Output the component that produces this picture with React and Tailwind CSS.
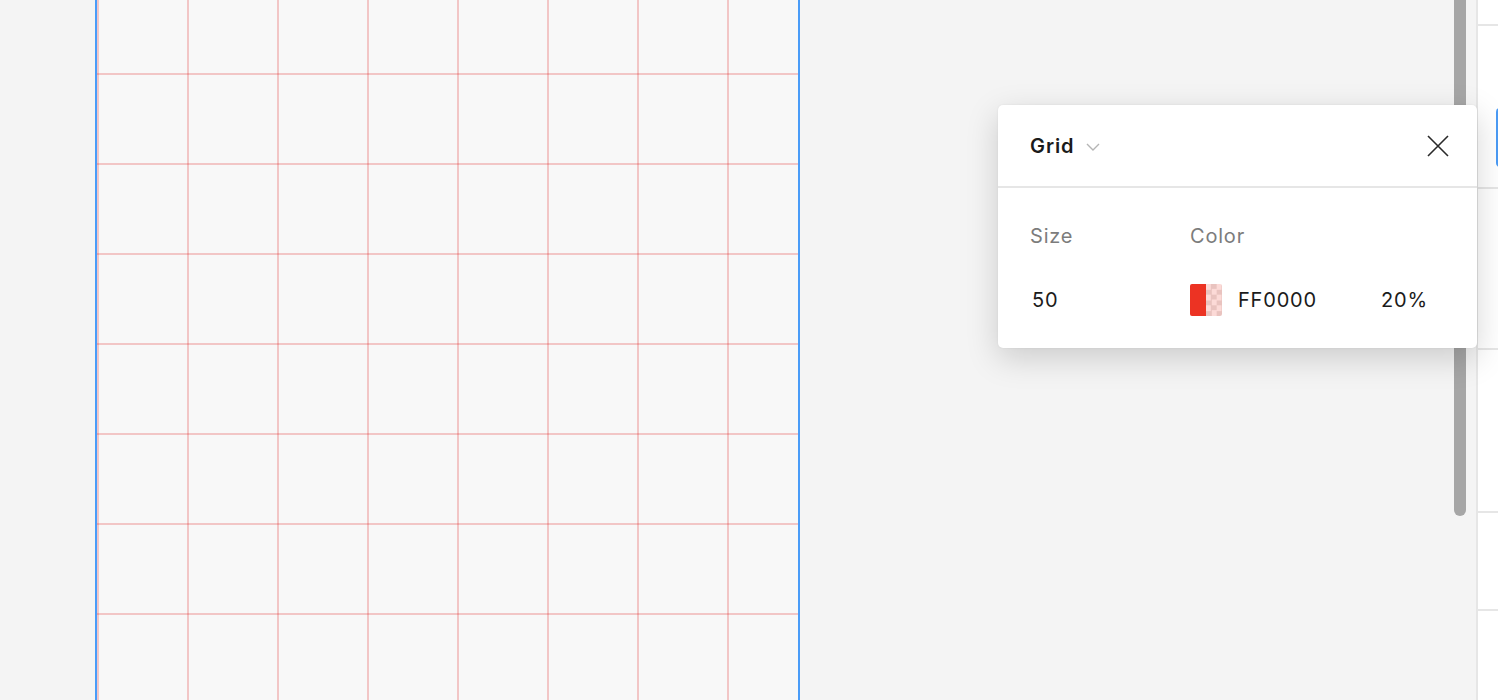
import React from 'react';

const GridPopover = () => {
  return (
    <div className="absolute left-[998px] top-[105px] w-[479px] rounded-[5px] bg-white shadow-[0_10px_32px_rgba(0,0,0,0.17),0_0_2px_rgba(0,0,0,0.08)]">
      {/* Header */}
      <div className="flex h-[83px] items-center border-b-2 border-[#e6e6e6] pl-8 pr-[28px]">
        <span className="text-[20px] font-semibold leading-none tracking-[0.9px] text-[#1b1b1b]">Grid</span>
        <svg className="ml-[12px] mt-[2px]" width="14" height="8" viewBox="0 0 14 8" fill="none">
          <path d="M1 1l6 6 6-6" stroke="#b5b5b5" strokeWidth="1.4" />
        </svg>
        <button type="button" className="ml-auto">
          <svg width="22" height="22" viewBox="0 0 22 22" fill="none">
            <path d="M1 1l20 20M21 1L1 21" stroke="#2a2a2a" strokeWidth="1.6" />
          </svg>
        </button>
      </div>

      {/* Body */}
      <div className="pl-8 pt-[33px] pb-[33px] tracking-[0.8px]">
        <div className="flex h-[30px] items-center text-[20px] text-[#7c7c7c]">
          <span className="w-[160px]">Size</span>
          <span>Color</span>
        </div>
        <div className="mt-[34px] flex h-[30px] items-center text-[20px] text-[#1b1b1b]">
          <span className="w-[160px] pl-[2px]">50</span>
          <div className="flex h-8 w-8 overflow-hidden rounded-[2px]">
            <div className="h-full w-1/2 bg-[#ec3323]" />
            <div className="h-full w-1/2 bg-[conic-gradient(#e9c3bf_25%,#fcdad7_0_50%,#e9c3bf_0_75%,#fcdad7_0)] bg-[size:10.67px_10.67px]" />
          </div>
          <span className="ml-4 w-[145px]">FF0000</span>
          <span className="-ml-[2px]">20%</span>
        </div>
      </div>
    </div>
  );
};

const App = () => {
  return (
    <div className="relative flex h-[700px] w-full overflow-hidden bg-[#f4f4f4] font-['Inter','Noto_Sans',sans-serif]">
      {/* Canvas left margin */}
      <div className="w-[95px] shrink-0" />

      {/* Frame with layout grid */}
      <div className="w-[705px] shrink-0 border-x-2 border-[#4a9cf8] bg-[#f8f8f8] bg-[image:linear-gradient(to_right,rgba(220,0,0,0.2)_0_2px,transparent_2px),linear-gradient(to_bottom,rgba(220,0,0,0.2)_0_2px,transparent_2px)] bg-[size:90px_90px] bg-[position:90px_73px]" />

      {/* Rest of canvas + scrollbar */}
      <div className="relative flex-1">
        <div className="absolute right-[10px] top-[-20px] h-[536px] w-[12px] rounded-full bg-[#a6a6a6]" />
      </div>

      {/* Right panel edge */}
      <div className="flex w-[22px] shrink-0 flex-col overflow-hidden border-l-2 border-[#e6e6e6] bg-white">
        <div className="h-[26px] shrink-0 border-b-2 border-[#e6e6e6]" />
        <div className="h-[163px] shrink-0 border-b-2 border-[#e6e6e6]">
          <div className="ml-[18px] mt-[82px] h-[59px] w-[20px] rounded-[4px] bg-[#4b9bf5]" />
        </div>
        <div className="h-[161px] shrink-0 border-b-2 border-[#e6e6e6]" />
        <div className="h-[163px] shrink-0 border-b-2 border-[#e6e6e6]" />
        <div className="h-[98px] shrink-0 border-b-2 border-[#e6e6e6]" />
      </div>

      <GridPopover />
    </div>
  );
};

export default App;
